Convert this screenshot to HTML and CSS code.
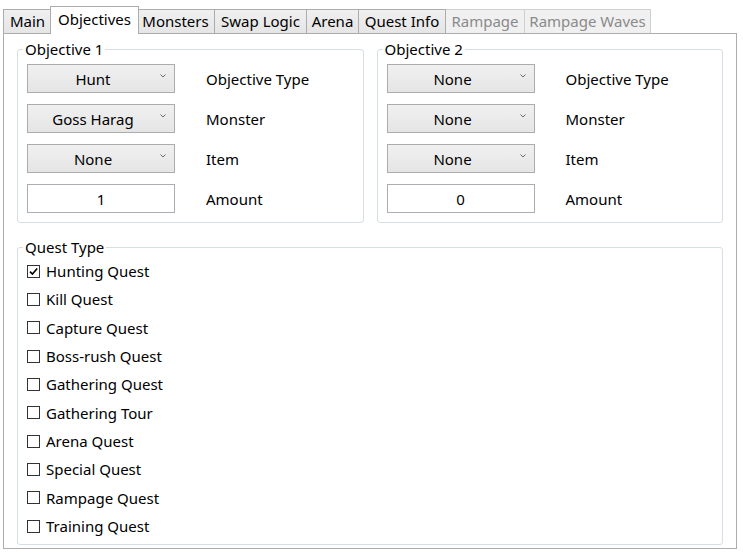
FILE: index.html
```html
<!DOCTYPE html>
<html>
<head>
<meta charset="utf-8">
<link rel="stylesheet" href="styles.css">
</head>
<body>
<div class="tabstrip">
  <div class="tab tab-first">Main</div>
  <div class="tab tab-selected">Objectives</div>
  <div class="tab">Monsters</div>
  <div class="tab">Swap Logic</div>
  <div class="tab">Arena</div>
  <div class="tab">Quest Info</div>
  <div class="tab tab-disabled">Rampage</div>
  <div class="tab tab-disabled">Rampage Waves</div>
</div>
<div class="panel">
  <div class="objectives">
    <fieldset class="group">
      <legend>Objective 1</legend>
      <div class="form">
        <div class="row"><div class="combo"><span class="combo-value">Hunt</span><svg class="chev" viewBox="0 0 6 4"><polyline points="0.5,0.5 3,3 5.5,0.5"/></svg></div><span>Objective Type</span></div>
        <div class="row"><div class="combo"><span class="combo-value">Goss Harag</span><svg class="chev" viewBox="0 0 6 4"><polyline points="0.5,0.5 3,3 5.5,0.5"/></svg></div><span>Monster</span></div>
        <div class="row"><div class="combo"><span class="combo-value">None</span><svg class="chev" viewBox="0 0 6 4"><polyline points="0.5,0.5 3,3 5.5,0.5"/></svg></div><span>Item</span></div>
        <div class="row"><div class="textbox">1</div><span>Amount</span></div>
      </div>
    </fieldset>
    <fieldset class="group">
      <legend>Objective 2</legend>
      <div class="form">
        <div class="row"><div class="combo"><span class="combo-value">None</span><svg class="chev" viewBox="0 0 6 4"><polyline points="0.5,0.5 3,3 5.5,0.5"/></svg></div><span>Objective Type</span></div>
        <div class="row"><div class="combo"><span class="combo-value">None</span><svg class="chev" viewBox="0 0 6 4"><polyline points="0.5,0.5 3,3 5.5,0.5"/></svg></div><span>Monster</span></div>
        <div class="row"><div class="combo"><span class="combo-value">None</span><svg class="chev" viewBox="0 0 6 4"><polyline points="0.5,0.5 3,3 5.5,0.5"/></svg></div><span>Item</span></div>
        <div class="row"><div class="textbox">0</div><span>Amount</span></div>
      </div>
    </fieldset>
  </div>
  <fieldset class="group quest-types">
    <legend>Quest Type</legend>
    <div class="checklist">
      <div class="check"><span class="box"><svg class="tick" viewBox="0 0 11 11"><path d="M2 5.6 L4.4 8 L9.2 2.4"/></svg></span>Hunting Quest</div>
      <div class="check"><span class="box"></span>Kill Quest</div>
      <div class="check"><span class="box"></span>Capture Quest</div>
      <div class="check"><span class="box"></span>Boss-rush Quest</div>
      <div class="check"><span class="box"></span>Gathering Quest</div>
      <div class="check"><span class="box"></span>Gathering Tour</div>
      <div class="check"><span class="box"></span>Arena Quest</div>
      <div class="check"><span class="box"></span>Special Quest</div>
      <div class="check"><span class="box"></span>Rampage Quest</div>
      <div class="check"><span class="box"></span>Training Quest</div>
    </div>
  </fieldset>
</div>
</body>
</html>
```
FILE: styles.css
```css
html, body {
  margin: 0;
  background: #ffffff;
}
body {
  font-family: "Noto Sans", "Open Sans", sans-serif;
  font-size: 15px;
  color: #000000;
}
.tabstrip {
  display: grid;
  grid-template-columns: 49px 85px 78px 92px 52px 87px 79px 126px;
  justify-content: start;
  align-items: end;
  height: 33px;
  padding-left: 3px;
  box-sizing: border-box;
}
.tab {
  height: 24px;
  box-sizing: border-box;
  border: 1px solid #acacac;
  border-bottom: 0;
  border-left: 0;
  background: linear-gradient(#f0f0f0, #e5e5e5);
  display: flex;
  align-items: center;
  justify-content: center;
  white-space: nowrap;
  line-height: 1;
  padding-bottom: 1px;
}
.tab-first {
  border-left: 1px solid #acacac;
}
.tab-selected {
  height: 28px;
  margin: 0 -2px -1px -2px;
  border-left: 1px solid #acacac;
  background: #ffffff;
  position: relative;
  z-index: 1;
  padding-bottom: 3px;
}
.tab-disabled {
  color: #8a8a8a;
  background: #f0f0f0;
  border-color: #d0d0d0;
}
.panel {
  margin: 0 6px 0 3px;
  height: 516px;
  box-sizing: border-box;
  border: 1px solid #acacac;
  padding: 6px 13px 3px 13px;
  display: flex;
  flex-direction: column;
}
.objectives {
  display: grid;
  grid-template-columns: 1fr 1fr;
  gap: 13px;
}
.group {
  margin: 0;
  padding: 0;
  min-width: 0;
  border: 1px solid #d5dfe5;
  border-radius: 3px;
}
.group legend {
  margin-left: 5px;
  padding: 0 2px;
  height: 18px;
  line-height: 18px;
}
.form {
  padding: 6px 0 9px 9px;
  display: flex;
  flex-direction: column;
  gap: 11px;
}
.row {
  display: flex;
  align-items: center;
  gap: 31px;
}
.combo {
  width: 148px;
  height: 29px;
  box-sizing: border-box;
  border: 1px solid #acacac;
  background: linear-gradient(#f0f0f0, #e5e5e5);
  display: flex;
  align-items: center;
}
.combo-value {
  flex: 1;
  text-align: center;
  padding-left: 2px;
}
.chev {
  width: 6px;
  height: 4px;
  margin: 0 8px 5px 4px;
  fill: none;
  stroke: #6a6a6a;
  stroke-width: 1;
}
.textbox {
  width: 148px;
  height: 29px;
  box-sizing: border-box;
  border: 1px solid #abadb3;
  background: #ffffff;
  display: flex;
  align-items: center;
  justify-content: center;
}
.quest-types {
  margin-top: 15px;
  flex: 1;
}
.checklist {
  padding: 1px 0 0 9px;
  display: grid;
  grid-auto-rows: 28.33px;
}
.check {
  display: flex;
  align-items: center;
  gap: 6px;
}
.box {
  width: 13px;
  height: 13px;
  box-sizing: border-box;
  border: 1px solid #333333;
  background: #ffffff;
  display: flex;
}
.tick {
  width: 11px;
  height: 11px;
  fill: none;
  stroke: #000000;
  stroke-width: 1.6;
}
```
